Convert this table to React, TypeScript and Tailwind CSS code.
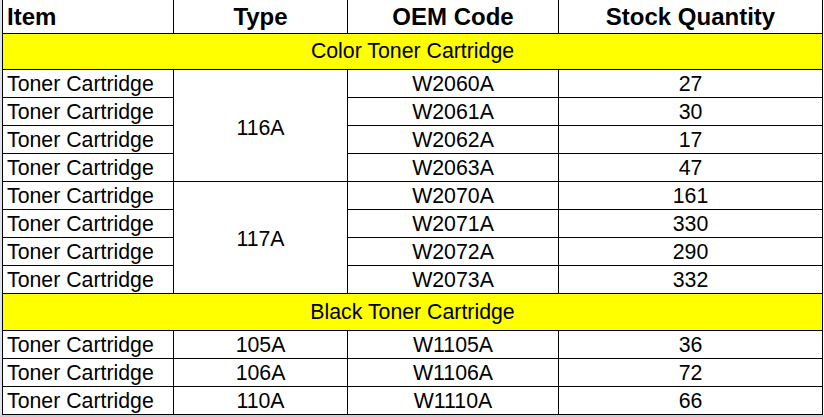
import React from "react";

type Row = { item: string; type?: string; code: string; qty: number };

const color: Row[] = [
  { item: "Toner Cartridge", code: "W2060A", qty: 27 },
  { item: "Toner Cartridge", code: "W2061A", qty: 30 },
  { item: "Toner Cartridge", code: "W2062A", qty: 17 },
  { item: "Toner Cartridge", code: "W2063A", qty: 47 },
  { item: "Toner Cartridge", code: "W2070A", qty: 161 },
  { item: "Toner Cartridge", code: "W2071A", qty: 330 },
  { item: "Toner Cartridge", code: "W2072A", qty: 290 },
  { item: "Toner Cartridge", code: "W2073A", qty: 332 },
];

const black: Row[] = [
  { item: "Toner Cartridge", type: "105A", code: "W1105A", qty: 36 },
  { item: "Toner Cartridge", type: "106A", code: "W1106A", qty: 72 },
  { item: "Toner Cartridge", type: "110A", code: "W1110A", qty: 66 },
];

const cell = "bg-white flex items-center pt-[2px]";

function Section({ title }: { title: string }) {
  return (
    <div className="col-span-4 bg-[#ffff00] flex items-center justify-center pt-[1px]">
      {title}
    </div>
  );
}

export default function App() {
  return (
    <div
      className="w-[824px] h-[417px] bg-white text-black text-[21.3px] leading-none overflow-hidden"
      style={{ fontFamily: '"Liberation Sans", Arial, sans-serif' }}
    >
      <div className="flex">
        <div className="w-[2px] h-[415px] bg-[#dfe3ec]" />
        <div className="bg-black px-px pb-px grid grid-cols-[170px_173px_210px_263px] grid-rows-[33px_35px_repeat(8,27px)_36px_repeat(3,27px)] gap-px">
          <div className="bg-white flex items-center pl-[4px] font-bold text-[24px]">Item</div>
          <div className="bg-white flex items-center justify-center font-bold text-[24px]">Type</div>
          <div className="bg-white flex items-center justify-center font-bold text-[24px]">OEM Code</div>
          <div className="bg-white flex items-center justify-center font-bold text-[24px]">Stock Quantity</div>

          <Section title="Color Toner Cartridge" />

          {color.map((r, i) => (
            <React.Fragment key={r.code}>
              <div className={`${cell} pl-[4px]`}>{r.item}</div>
              {i === 0 && (
                <div className="bg-white row-span-4 flex items-center justify-center pt-[6px]">116A</div>
              )}
              {i === 4 && (
                <div className="bg-white row-span-4 flex items-center justify-center pt-[4px]">117A</div>
              )}
              <div className={`${cell} justify-center`}>{r.code}</div>
              <div className={`${cell} justify-center`}>{r.qty}</div>
            </React.Fragment>
          ))}

          <Section title="Black Toner Cartridge" />

          {black.map((r) => (
            <React.Fragment key={r.code}>
              <div className={`${cell} pl-[4px]`}>{r.item}</div>
              <div className={`${cell} justify-center`}>{r.type}</div>
              <div className={`${cell} justify-center`}>{r.code}</div>
              <div className={`${cell} justify-center`}>{r.qty}</div>
            </React.Fragment>
          ))}
        </div>
      </div>
      <div className="h-[2px] bg-[#c8cfd9]" />
    </div>
  );
}
